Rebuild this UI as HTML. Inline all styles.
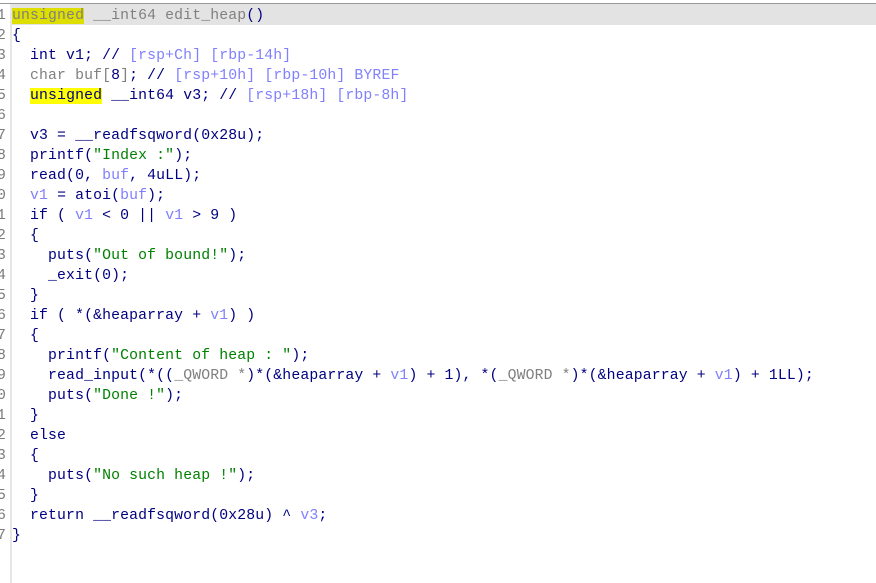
<!DOCTYPE html>
<html><head><style>
body{margin:0;width:876px;height:583px;background:#fff;overflow:hidden;position:relative;font-family:"Liberation Mono",monospace;font-size:14.8px;}
.top{position:absolute;left:0;top:0;width:876px;height:3px;background:#fff;border-bottom:1px solid #999;}
.gut{position:absolute;left:10px;top:4px;width:2px;height:579px;background:#e6e6e6;}
.hl{position:absolute;left:12px;top:4px;width:864px;height:21px;background:#e3e3e3;}
.l{position:absolute;left:12px;white-space:pre;color:#000080;line-height:20px;letter-spacing:0.13px;}
.g{color:#808080}.v{color:#8080ff}.s{color:#008000}.n{color:#000080}
.y{background:#ffff00}.y1{background:#dede00}
</style></head><body>
<div class="top"></div><div class="hl"></div><div class="gut"></div>
<div id="c"></div>
<script>
var L=[
'<span class="y1 g">unsigned</span><span class="g"> __int64 edit_heap</span>()',
'{',
'  int v1; // <span class="v">[rsp+Ch] [rbp-14h]</span>',
'  <span class="g">char buf[</span>8<span class="g">]</span>; // <span class="v">[rsp+10h] [rbp-10h] BYREF</span>',
'  <span class="y">unsigned</span> __int64 v3; // <span class="v">[rsp+18h] [rbp-8h]</span>',
'',
'  v3 = __readfsqword(0x28u);',
'  printf(<span class="s">"Index :"</span>);',
'  read(0, <span class="v">buf</span>, 4uLL);',
'  <span class="v">v1</span> = atoi(<span class="v">buf</span>);',
'  if ( <span class="v">v1</span> &lt; 0 || <span class="v">v1</span> &gt; 9 )',
'  {',
'    puts(<span class="s">"Out of bound!"</span>);',
'    _exit(0);',
'  }',
'  if ( *(&amp;heaparray + <span class="v">v1</span>) )',
'  {',
'    printf(<span class="s">"Content of heap : "</span>);',
'    read_input(*((<span class="g">_QWORD *</span>)*(&amp;heaparray + <span class="v">v1</span>) + 1), *(<span class="g">_QWORD *</span>)*(&amp;heaparray + <span class="v">v1</span>) + 1LL);',
'    puts(<span class="s">"Done !"</span>);',
'  }',
'  else',
'  {',
'    puts(<span class="s">"No such heap !"</span>);',
'  }',
'  return __readfsqword(0x28u) ^ <span class="v">v3</span>;',
'}'];
var h='';
for(var i=0;i<L.length;i++){var t=6+i*20;
h+='<div class="l" style="left:-3px;top:'+t+'px;color:#7a7a7a">'+((i+1)%10)+'</div>';
h+='<div class="l" style="top:'+t+'px">'+L[i]+'</div>';}
document.getElementById('c').innerHTML=h;
</script>
</body></html>
